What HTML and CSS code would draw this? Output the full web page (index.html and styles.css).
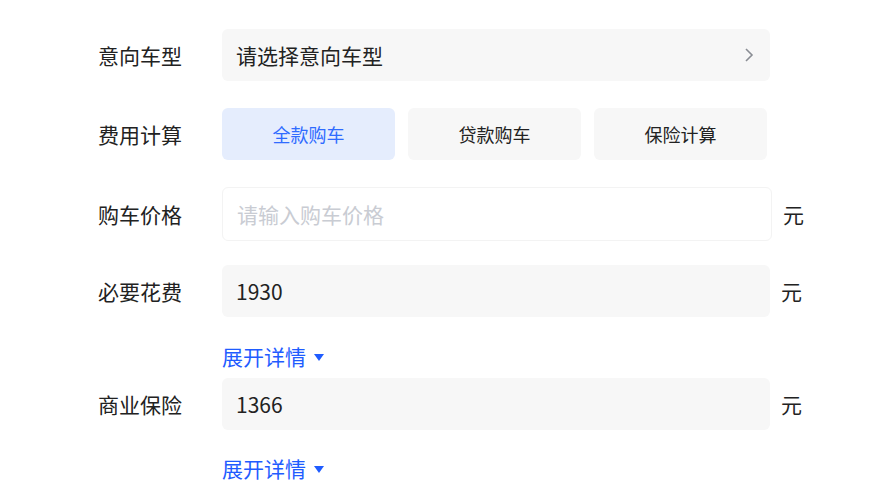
FILE: index.html
```html
<!DOCTYPE html>
<html lang="zh-CN">
<head>
<meta charset="UTF-8">
<meta name="viewport" content="width=device-width, initial-scale=1.0">
<title>购车计算</title>
<link rel="stylesheet" href="styles.css">
</head>
<body>

<div class="calc">
  <!-- 车型选择 -->
  <div class="row">
    <span class="label">意向车型</span>
    <div class="field select">
      <span>请选择意向车型</span>
      <svg class="arrow" width="10" height="16" viewBox="0 0 10 16"><polyline points="2,2 8,8 2,14" fill="none" stroke="#8a8d94" stroke-width="1.6"/></svg>
    </div>
  </div>

  <div class="row">
    <span class="label">费用计算</span>
    <div class="tabs">
      <div class="tab active">全款购车</div>
      <div class="tab">贷款购车</div>
      <div class="tab">保险计算</div>
    </div>
  </div>

  <div class="row row-input">
    <span class="label">购车价格</span>
    <input class="field input" placeholder="请输入购车价格">
    <span class="unit">元</span>
  </div>

  <div class="row">
    <span class="label">必要花费</span>
    <div class="field">1930</div>
    <span class="unit">元</span>
  </div>
  <div class="more">展开详情 <i class="tri"></i></div>

  <div class="row">
    <span class="label">商业保险</span>
    <div class="field">1366</div>
    <span class="unit">元</span>
  </div>
  <div class="more">展开详情 <i class="tri"></i></div>
</div>

</body>
</html>
```

FILE: styles.css
```css
body { margin:0; background:#fff; font-family:"Noto Sans CJK SC", sans-serif; color:#222; }
.calc { padding:29px 0 0 98px; }

.row { display:flex; align-items:center; margin-bottom:27px; }
.row-input { margin-bottom:24px; }
.label { width:124px; font-size:21px; color:#222; }

.field {
  box-sizing:border-box; width:548px; height:52px; padding:0 14px;
  background:#f7f7f7; border-radius:6px;
  display:flex; align-items:center; font-size:21px; color:#222;
}
.select { justify-content:space-between; padding-right:16px; }
.input {
  width:550px; height:54px; background:#fff; border:1px solid #f3f3f3;
  font-family:inherit; outline:none; margin:0;
}
.input::placeholder { color:#c9ccd3; }
.unit { margin-left:11px; font-size:21px; color:#222; }

.tabs { display:flex; gap:13px; }
.tab {
  width:173px; height:52px; border-radius:6px; background:#f7f7f7;
  display:flex; align-items:center; justify-content:center;
  font-size:18px; color:#222;
}
.tab.active { background:#e5edfd; color:#2f6bff; }

.more {
  margin:-2px 0 8px 124px; line-height:28px;
  font-size:21px; color:#1f5cff;
  display:flex; align-items:center; gap:8px;
}
.row + .more:last-child { margin-top:-3px; }
.tri {
  width:0; height:0; margin-top:2px;
  border-left:5px solid transparent; border-right:5px solid transparent;
  border-top:7px solid #1f5cff;
}
```
